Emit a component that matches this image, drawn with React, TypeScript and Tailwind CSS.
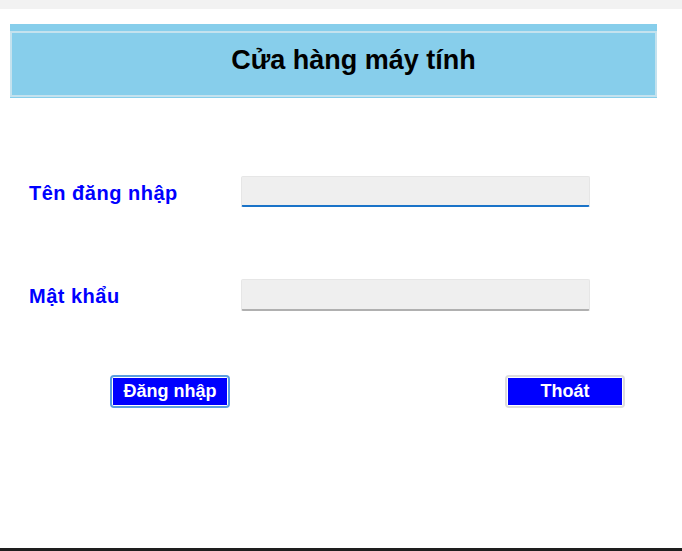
import React from 'react';

const App = () => {
  return (
    <div className="w-[682px] h-[551px] flex flex-col bg-white overflow-hidden" style={{ fontFamily: '"Liberation Sans", Arial, sans-serif' }}>
      <div className="h-[9px] bg-[#f2f2f2]" />
      <div className="flex-1 px-[10px] pt-[15px]">
        {/* header */}
        <div className="w-[647px] h-[74px] bg-[#87ceeb] pt-[7px] pb-[1px]">
          <div className="h-full border-2 border-[#c4e2ee] flex items-center justify-center">
            <h1 className="text-[27px] font-bold text-black pl-[40px] pb-[8px]">Cửa hàng máy tính</h1>
          </div>
        </div>

        {/* form */}
        <div className="mt-[78px] h-[31px] flex items-center">
          <label className="w-[231px] pl-[19px] text-[20px] leading-none font-bold tracking-[0.5px] text-[#0000ff] pt-[2px]">Tên đăng nhập</label>
          <input
            type="text"
            title="username"
            className="w-[349px] h-[31px] bg-[#efefef] border border-[#e6e6e6] border-b-2 border-b-[#1a73c8] rounded-[2px] outline-none"
          />
        </div>
        <div className="mt-[72px] h-[32px] flex items-center">
          <label className="w-[231px] pl-[19px] text-[20px] leading-none font-bold tracking-[0.5px] text-[#0000ff] pt-[2px]">Mật khẩu</label>
          <input
            type="password"
            title="password"
            className="w-[349px] h-[32px] bg-[#efefef] border border-[#e6e6e6] border-b-2 border-b-[#b0b0b0] rounded-[2px] outline-none"
          />
        </div>

        <div className="mt-[64px] flex">
          <button
            type="button"
            className="ml-[100px] w-[120px] h-[33px] rounded-[4px] border-2 border-[#5b9ee0] bg-white p-[1px]"
          >
            <span className="flex h-full w-full items-center justify-center bg-[#0000ff] text-white text-[18px] font-bold">Đăng nhập</span>
          </button>
          <button
            type="button"
            className="ml-[275px] w-[120px] h-[33px] rounded-[4px] border-2 border-[#dcdcdc] bg-white p-[1px]"
          >
            <span className="flex h-full w-full items-center justify-center bg-[#0000ff] text-white text-[18px] font-bold">Thoát</span>
          </button>
        </div>
      </div>
      <div className="h-[3px] bg-[#1e1e1e]" />
    </div>
  );
};

export default App;
